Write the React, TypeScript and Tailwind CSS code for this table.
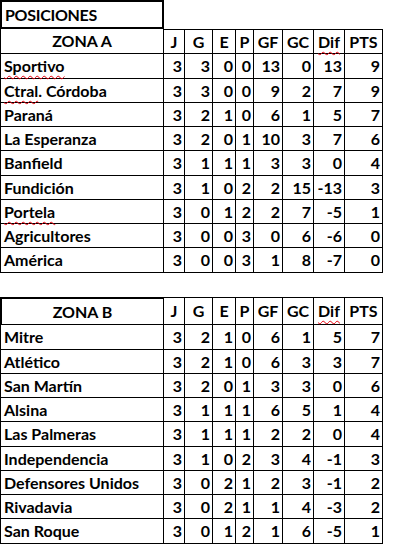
import React from 'react';

type Row = [string, number, number, number, number, number, number, number, number];

const zonaA: Row[] = [
  ['Sportivo', 3, 3, 0, 0, 13, 0, 13, 9],
  ['Ctral. Córdoba', 3, 3, 0, 0, 9, 2, 7, 9],
  ['Paraná', 3, 2, 1, 0, 6, 1, 5, 7],
  ['La Esperanza', 3, 2, 0, 1, 10, 3, 7, 6],
  ['Banfield', 3, 1, 1, 1, 3, 3, 0, 4],
  ['Fundición', 3, 1, 0, 2, 2, 15, -13, 3],
  ['Portela', 3, 0, 1, 2, 2, 7, -5, 1],
  ['Agricultores', 3, 0, 0, 3, 0, 6, -6, 0],
  ['América', 3, 0, 0, 3, 1, 8, -7, 0],
];

const zonaB: Row[] = [
  ['Mitre', 3, 2, 1, 0, 6, 1, 5, 7],
  ['Atlético', 3, 2, 1, 0, 6, 3, 3, 7],
  ['San Martín', 3, 2, 0, 1, 3, 3, 0, 6],
  ['Alsina', 3, 1, 1, 1, 6, 5, 1, 4],
  ['Las Palmeras', 3, 1, 1, 1, 2, 2, 0, 4],
  ['Independencia', 3, 1, 0, 2, 3, 4, -1, 3],
  ['Defensores Unidos', 3, 0, 2, 1, 2, 3, -1, 2],
  ['Rivadavia', 3, 0, 2, 1, 1, 4, -3, 2],
  ['San Roque', 3, 0, 1, 2, 1, 6, -5, 1],
];

// widths of the stat columns, each includes its right border
const statCols = ['w-[21px]', 'w-[28px]', 'w-[23px]', 'w-[18px]', 'w-[29px]', 'w-[31px]', 'w-[31px]', 'w-[38px]'];
const headers = ['J', 'G', 'E', 'P', 'GF', 'GC', 'Dif', 'PTS'];
const rowHeights = ['h-[25px]', 'h-[24px]', 'h-[24px]', 'h-[24px]', 'h-[25px]', 'h-[24px]', 'h-[24px]', 'h-[24px]', 'h-[25px]'];

const squiggle = 'underline decoration-wavy decoration-red-600 decoration-1 underline-offset-[3px]';

const Name = ({ name }: { name: string }) => {
  if (name === 'Sportivo' || name === 'Portela') return <span className={squiggle}>{name}</span>;
  if (name === 'Ctral. Córdoba')
    return (
      <span>
        <span className={squiggle}>Ctral</span>. Córdoba
      </span>
    );
  return <span>{name}</span>;
};

const HeaderRow = ({ title, zonaB }: { title: string; zonaB?: boolean }) => (
  <div className="flex">
    <div
      className={`w-[164px] flex items-center justify-center border-black border-r border-b ${
        zonaB ? 'h-[28px] border-t-2 border-l-2' : 'h-[25px] border-l'
      }`}
    >
      {title}
    </div>
    {headers.map((h, i) => (
      <div
        key={h}
        className={`${statCols[i]} ${zonaB ? 'h-[28px]' : 'h-[25px]'} flex items-center justify-center border-black border-t border-r border-b`}
      >
        {h === 'Dif' ? <span className={squiggle}>Dif</span> : h}
      </div>
    ))}
  </div>
);

const Table = ({ title, rows, zonaB }: { title: string; rows: Row[]; zonaB?: boolean }) => (
  <div>
    <HeaderRow title={title} zonaB={zonaB} />
    {rows.map((r, ri) => (
      <div key={r[0]} className={`flex ${rowHeights[ri]}`}>
        <div className="w-[164px] flex items-center pl-[3px] border-black border-l border-r border-b whitespace-nowrap">
          <Name name={r[0]} />
        </div>
        {r.slice(1).map((v, i) => (
          <div
            key={i}
            className={`${statCols[i]} flex items-center justify-end pr-[2px] border-black border-r border-b`}
          >
            {v}
          </div>
        ))}
      </div>
    ))}
  </div>
);

export default function App() {
  return (
    <div className="w-[415px] h-[548px] bg-white text-black font-bold text-[16px] leading-none font-['Lato',_'Open_Sans',_sans-serif]">
      <div className="w-[164px] h-[29px] border-2 border-black flex items-center pl-[3px] tracking-[-0.3px]">POSICIONES</div>
      <Table title="ZONA A" rows={zonaA} />
      <div className="h-[24px]" />
      <Table title="ZONA B" rows={zonaB} zonaB />
    </div>
  );
}
